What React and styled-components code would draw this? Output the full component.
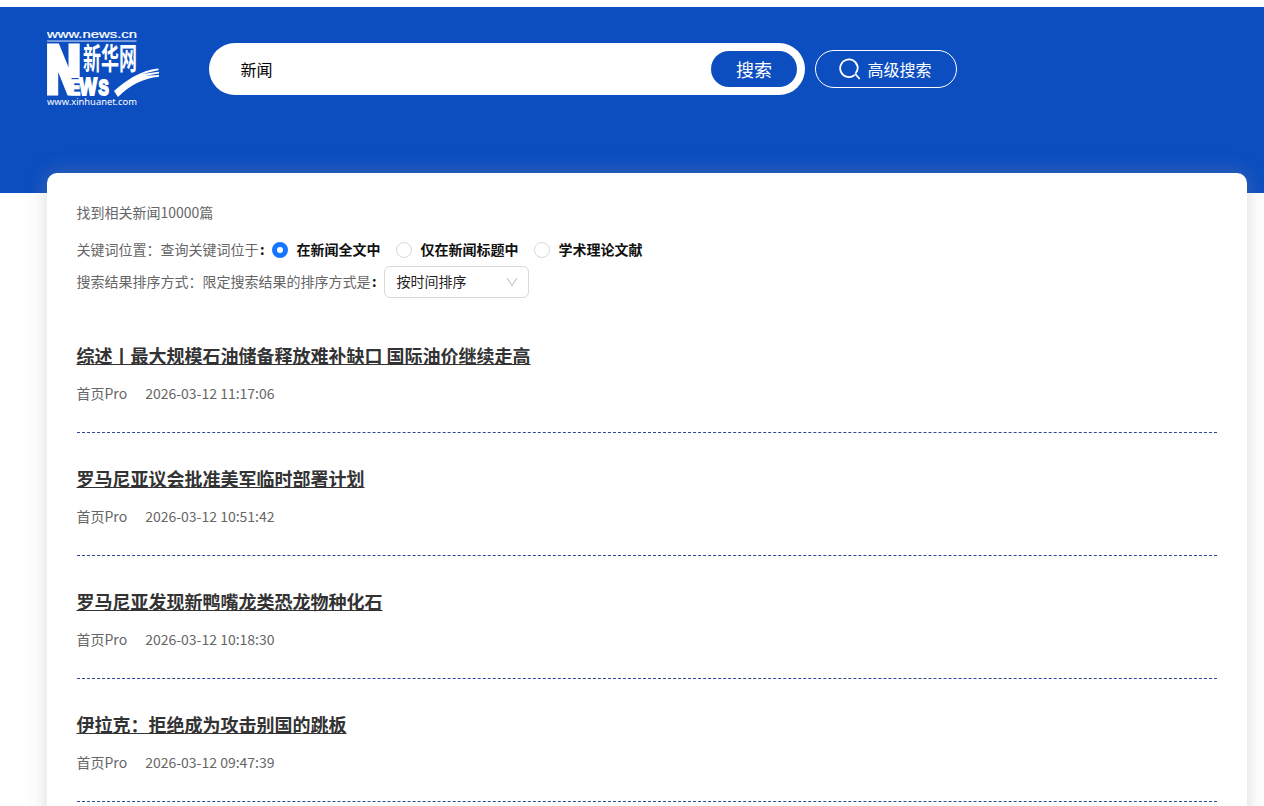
import React from 'react';
import styled, { createGlobalStyle } from 'styled-components';

const GlobalStyle = createGlobalStyle`
  * { box-sizing: border-box; }
  html, body { margin: 0; height: 100%; overflow: hidden; }
  body {
    background: #fff;
    color: #333;
    font: 14px/22px "Noto Sans CJK SC", sans-serif;
  }
`;

const Page = styled.div`
  height: 806px;
  padding-top: 7px;
  overflow: hidden;
`;

const Header = styled.header`
  display: flex;
  align-items: flex-start;
  height: 186px;
  padding: 22px 47px 0;
  background: #0c4ec0;
`;

const Logo = styled.svg`
  display: block;
  flex: none;
  width: 114px;
  height: 78px;
  fill: #fff;
`;

const SearchBox = styled.form`
  display: flex;
  align-items: center;
  flex: none;
  width: 596px;
  height: 52px;
  margin: 14px 0 0 48px;
  padding: 0 8px 0 31.5px;
  border-radius: 26px;
  background: #fff;
`;

const SearchInput = styled.input`
  flex: 1;
  min-width: 0;
  padding: 0;
  border: 0;
  outline: 0;
  background: transparent;
  color: #000;
  font: 16px/24px "Noto Sans CJK SC", sans-serif;
`;

const SearchButton = styled.button`
  width: 86px;
  height: 36px;
  padding: 0;
  border: 0;
  border-radius: 18px;
  background: #0c4ec0;
  color: #fff;
  font: 18px/36px "Noto Sans CJK SC", sans-serif;
`;

const AdvancedButton = styled.button`
  display: flex;
  align-items: center;
  flex: none;
  width: 142px;
  height: 38px;
  margin: 21px 0 0 10px;
  padding: 0 0 0 23px;
  border: 1px solid #fff;
  border-radius: 19px;
  background: transparent;
  color: #fff;
  font: 16px/36px "Noto Sans CJK SC", sans-serif;
`;

const SearchIcon = styled.svg`
  width: 22px;
  height: 22px;
  margin-right: 6.5px;
  fill: none;
  stroke: #fff;
  stroke-width: 1.8;
`;

const Panel = styled.main`
  position: relative;
  width: 1200px;
  min-height: 700px;
  margin: -20px 0 0 47px;
  padding: 28px 30px 0;
  border-radius: 10px;
  background: #fff;
  box-shadow: 0 0 20px rgba(150, 150, 150, 0.35);
`;

const Count = styled.p`
  margin: 0 0 11px -0.5px;
  color: #666;
`;

const FilterRow = styled.div`
  display: flex;
  align-items: center;
  height: 32px;
  color: #111;
  font-weight: 700;
`;

const FilterLabel = styled.span`
  margin-left: -0.5px;
  padding-bottom: 2px;
  color: #666;
  font-weight: 400;
`;

const Colon = styled.span`
  width: 13.5px;
  padding: 0 0 2px 1.5px;
`;

const Option = styled.label`
  display: flex;
  align-items: center;
  gap: 8.5px;
  margin-right: 15.5px;
`;

const OptionText = styled.span`
  padding-bottom: 2px;
`;

const Radio = styled.span`
  width: 16px;
  height: 16px;
  border: ${(p) => (p.$checked ? '5px solid #1677ff' : '1px solid #d9d9d9')};
  border-radius: 50%;
  background: #fff;
`;

const Select = styled.div`
  display: flex;
  align-items: center;
  justify-content: space-between;
  width: 145px;
  height: 32px;
  padding: 0 10px 0 11.5px;
  border: 1px solid #d9d9d9;
  border-radius: 6px;
  color: #1f1f1f;
  font-weight: 400;
`;

const SelectText = styled.span`
  padding-bottom: 2px;
`;

const Chevron = styled.svg`
  width: 12px;
  height: 12px;
  fill: none;
  stroke: #b8b8b8;
`;

const Results = styled.div`
  padding-top: 12px;
`;

const Article = styled.article`
  height: 123px;
  padding-top: 31px;
  border-bottom: 1px dashed #2c4b94;
`;

const Title = styled.h2`
  margin: 0 0 0 -0.5px;
  color: #333;
  font-size: 18px;
  line-height: 28px;
  text-decoration: underline;
`;

const Meta = styled.div`
  display: flex;
  gap: 18px;
  margin: 13px 0 0 -0.5px;
  color: #666;
`;

const articles = [
  ['综述丨最大规模石油储备释放难补缺口 国际油价继续走高', '2026-03-12 11:17:06'],
  ['罗马尼亚议会批准美军临时部署计划', '2026-03-12 10:51:42'],
  ['罗马尼亚发现新鸭嘴龙类恐龙物种化石', '2026-03-12 10:18:30'],
  ['伊拉克：拒绝成为攻击别国的跳板', '2026-03-12 09:47:39'],
];

const options = ['在新闻全文中', '仅在新闻标题中', '学术理论文献'];

function NewsLogo() {
  return (
    <Logo viewBox="0 0 114 78">
      <text x="0" y="8.8" fontFamily="Liberation Sans" fontSize="10" textLength="90" lengthAdjust="spacingAndGlyphs" stroke="#fff" strokeWidth=".2">www.news.cn</text>
      <rect x="0" y="11.4" width="89.5" height="1.3" opacity=".65" />
      <text transform="translate(-.6 63.2) scale(.73 1)" fontFamily="Liberation Sans" fontWeight="700" fontSize="64" stroke="#fff" strokeWidth="7">N</text>
      <path d="M24.5 49h10v18.5h-10z" fill="#0c4ec0" />
      <text transform="translate(23.2 66) scale(.7 1)" fontFamily="Liberation Sans" fontWeight="700" fontSize="21.5" stroke="#fff" strokeWidth="1.6">E</text>
      <text transform="translate(32.3 66) scale(.8 1)" fontFamily="Liberation Sans" fontWeight="700" fontSize="23.5" stroke="#fff" strokeWidth="1.8">W</text>
      <text transform="translate(51.6 65.8) scale(.7 1)" fontFamily="Liberation Sans" fontWeight="700" fontSize="22" stroke="#fff" strokeWidth="2">S</text>
      <text transform="translate(36 40) scale(.6 1)" fontFamily="Noto Sans CJK SC" fontWeight="700" fontSize="30">新华网</text>
      <path d="M67 62C78 52 94 41 111 39.5l1 1.6-17 3.8 17-2.2v1.8l-14 2.3 14-.8v1.8C96 49.5 83 56 71 68z" />
      <text x="0" y="75.5" fontFamily="Noto Sans" fontSize="9" textLength="90" lengthAdjust="spacingAndGlyphs">www.xinhuanet.com</text>
    </Logo>
  );
}

export default function App() {
  return (
    <Page>
      <GlobalStyle />
      <Header>
        <NewsLogo />
        <SearchBox>
          <SearchInput defaultValue="新闻" />
          <SearchButton type="button">搜索</SearchButton>
        </SearchBox>
        <AdvancedButton>
          <SearchIcon viewBox="0 0 22 22">
            <path d="M15.6 17A8.8 8.8 0 1 1 18.6 8.5Q19.2 12.3 16.6 15.2M16 15.6l4.7 5.4" />
          </SearchIcon>
          高级搜索
        </AdvancedButton>
      </Header>
      <Panel>
        <Count>找到相关新闻10000篇</Count>
        <FilterRow>
          <FilterLabel>关键词位置：查询关键词位于</FilterLabel>
          <Colon>:</Colon>
          {options.map((label, i) => (
            <Option key={label}>
              <Radio $checked={i === 0} />
              <OptionText>{label}</OptionText>
            </Option>
          ))}
        </FilterRow>
        <FilterRow>
          <FilterLabel>搜索结果排序方式：限定搜索结果的排序方式是</FilterLabel>
          <Colon>:</Colon>
          <Select>
            <SelectText>按时间排序</SelectText>
            <Chevron viewBox="0 0 12 12">
              <path d="M1 2l5 7.5L11 2" />
            </Chevron>
          </Select>
        </FilterRow>
        <Results>
          {articles.map(([title, time]) => (
            <Article key={title}>
              <Title>{title}</Title>
              <Meta>
                <span>首页Pro</span>
                <time>{time}</time>
              </Meta>
            </Article>
          ))}
        </Results>
      </Panel>
    </Page>
  );
}
